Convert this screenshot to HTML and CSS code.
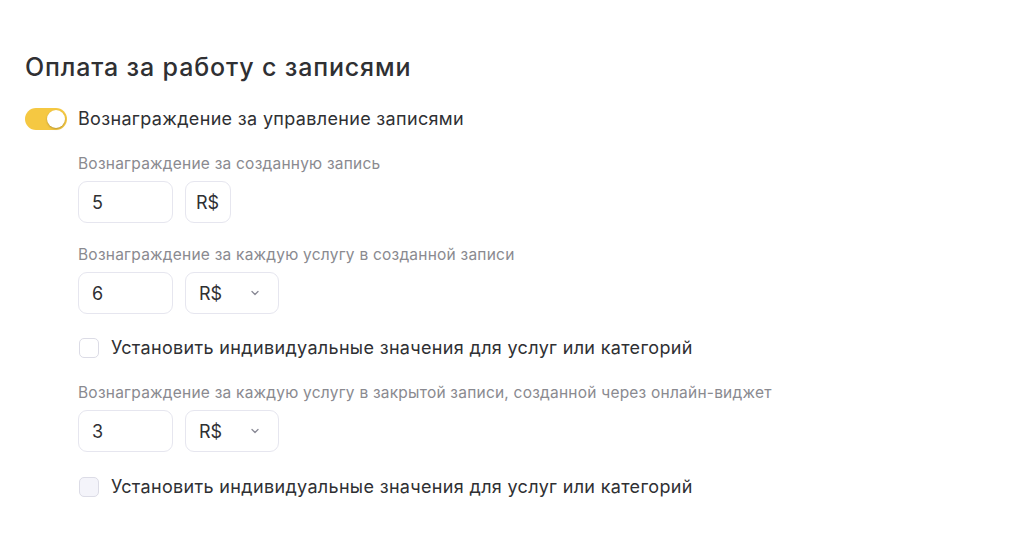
FILE: index.html
```html
<!DOCTYPE html>
<html lang="ru">
<head>
<meta charset="utf-8">
<title>Оплата за работу с записями</title>
<link rel="stylesheet" href="styles.css">
</head>
<body>
<div class="page">
  <h1 class="title">Оплата за работу с записями</h1>
  <div class="toggle-row">
    <span class="toggle"><span class="knob"></span></span>
    <span class="toggle-label">Вознаграждение за управление записями</span>
  </div>
  <div class="group">
    <div class="field">
      <div class="field-label">Вознаграждение за созданную запись</div>
      <div class="inputs">
        <div class="input">5</div>
        <div class="unit">R$</div>
      </div>
    </div>
    <div class="field">
      <div class="field-label">Вознаграждение за каждую услугу в созданной записи</div>
      <div class="inputs">
        <div class="input">6</div>
        <div class="select"><span>R$</span>
          <svg class="chev" width="10" height="6" viewBox="0 0 10 6"><path d="M2 1.5 L5 4.5 L8 1.5" fill="none" stroke="#8a8a96" stroke-width="1.3" stroke-linecap="round" stroke-linejoin="round"/></svg>
        </div>
      </div>
    </div>
    <label class="check-row">
      <span class="check"></span>
      <span class="check-label">Установить индивидуальные значения для услуг или категорий</span>
    </label>
    <div class="field">
      <div class="field-label">Вознаграждение за каждую услугу в закрытой записи, созданной через онлайн-виджет</div>
      <div class="inputs">
        <div class="input">3</div>
        <div class="select"><span>R$</span>
          <svg class="chev" width="10" height="6" viewBox="0 0 10 6"><path d="M2 1.5 L5 4.5 L8 1.5" fill="none" stroke="#8a8a96" stroke-width="1.3" stroke-linecap="round" stroke-linejoin="round"/></svg>
        </div>
      </div>
    </div>
    <label class="check-row second">
      <span class="check filled"></span>
      <span class="check-label">Установить индивидуальные значения для услуг или категорий</span>
    </label>
  </div>
</div>
</body>
</html>
```
FILE: styles.css
```css
html, body {
  margin: 0;
  padding: 0;
  background: #ffffff;
}
body {
  font-family: Inter, "Noto Sans", sans-serif;
  color: #2f3033;
}
.page {
  padding: 50px 25px 0 25px;
}
.title {
  margin: 0;
  font-size: 25px;
  font-weight: 500;
  letter-spacing: 0.85px;
  line-height: 34px;
  color: #2f3033;
}
.toggle-row {
  display: flex;
  align-items: center;
  gap: 11px;
  margin-top: 23px;
}
.toggle {
  width: 42px;
  height: 22px;
  border-radius: 11px;
  background: #f5c842;
  display: flex;
  align-items: center;
  justify-content: flex-end;
  padding: 0 2px;
  box-sizing: border-box;
}
.knob {
  width: 18px;
  height: 18px;
  border-radius: 50%;
  background: #ffffff;
  box-shadow: 0 1px 2px rgba(0,0,0,0.25);
}
.toggle-label {
  font-size: 18px;
  letter-spacing: 0.33px;
  line-height: 24px;
}
.group {
  padding-left: 53px;
  padding-top: 23px;
  display: flex;
  flex-direction: column;
}
.field {
  display: flex;
  flex-direction: column;
  gap: 7px;
  margin-bottom: 22px;
}
.field-label {
  font-size: 15.5px;
  letter-spacing: 0.22px;
  line-height: 20px;
  color: #8a8a90;
}
.inputs {
  display: flex;
  gap: 12px;
}
.input, .unit, .select {
  height: 42px;
  box-sizing: border-box;
  border: 1px solid #e6e6ef;
  border-radius: 9px;
  display: flex;
  align-items: center;
  font-size: 18px;
  color: #2f3033;
}
.input {
  width: 95px;
  padding-left: 13px;
}
.unit {
  width: 46px;
  padding-left: 10px;
}
.select {
  width: 94px;
  padding: 0 18px 0 13px;
  justify-content: space-between;
}
.chev {
  display: block;
}
.check-row {
  display: flex;
  align-items: center;
  gap: 12px;
  margin-bottom: 23px;
}
.check-row.second {
  margin-top: 1px;
}
.check {
  width: 20px;
  height: 20px;
  box-sizing: border-box;
  border: 1px solid #dcdce6;
  border-radius: 5px;
  background: #ffffff;
  margin-left: 1px;
}
.check.filled {
  background: #f4f4fa;
}
.check-label {
  font-size: 18px;
  letter-spacing: 0.33px;
  line-height: 24px;
}
```
